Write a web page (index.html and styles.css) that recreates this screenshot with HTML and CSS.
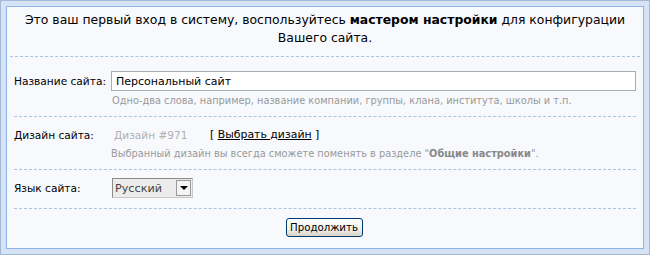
FILE: index.html
```html
<!DOCTYPE html>
<html lang="ru">
<head>
  <meta charset="UTF-8" />
  <title>Мастер настройки</title>
  <link rel="stylesheet" href="styles.css">
</head>
<body>

  <div class="frame">
    <div class="panel">
      <div class="intro">
        Это ваш первый вход в систему, воспользуйтесь <b>мастером настройки</b> для конфигурации<br>
        Вашего сайта.
      </div>

      <div class="row row-name">
        <div class="label">Название сайта:</div>
        <div class="field">
          <input type="text" class="text-input" value="Персональный сайт">
          <div class="hint">Одно-два слова, например, название компании, группы, клана, института, школы и т.п.</div>
        </div>
      </div>

      <div class="row row-design">
        <div class="label">Дизайн сайта:</div>
        <div class="field">
          <div class="design-line">
            <span class="design-name">Дизайн #971</span>
            <span class="design-pick">[ <a href="#">Выбрать дизайн</a> ]</span>
          </div>
          <div class="hint">Выбранный дизайн вы всегда сможете поменять в разделе "<b>Общие настройки</b>".</div>
        </div>
      </div>

      <div class="row row-lang">
        <div class="label">Язык сайта:</div>
        <div class="field">
          <div class="select">
            <span class="select-value">Русский</span>
            <span class="select-arrow"></span>
          </div>
        </div>
      </div>

      <div class="actions">
        <button class="btn">Продолжить</button>
      </div>
    </div>
  </div>

</body>
</html>
```

FILE: styles.css
```css
body {
  margin: 0;
  font-family: 'DejaVu Sans', Verdana, sans-serif;
  font-size: 12.4px;
  color: #000;
  background: #fff;
}

.frame {
  width: 638px;
  height: 243px;
  border: 1px solid #a3b9d6;
  padding: 5px;
  background: #d5e3f5;
}

.panel {
  height: 241px;
  border: 1px solid #8fb3e4;
  background: #f7f9fd;
}

.intro {
  margin: 0 3px;
  padding: 4px 0 9px;
  line-height: 18px;
  text-align: center;
  border-bottom: 1px dashed #a8c2ea;
}

.row {
  display: flex;
  margin: 0 7px;
  font-size: 10.6px;
  border-bottom: 1px dashed #a8c2ea;
}

.label {
  width: 97px;
  flex-shrink: 0;
  white-space: nowrap;
}

.field {
  flex: 1;
}

.hint {
  font-size: 9.8px;
  color: #999;
  line-height: 14px;
}

.hint b {
  color: #888;
}

.row-name {
  padding-top: 14px;
  padding-bottom: 8px;
}

.row-name .label {
  line-height: 20px;
}

.text-input {
  display: block;
  box-sizing: border-box;
  width: 525px;
  height: 20px;
  margin: 0;
  padding: 1px 4px 0;
  border: 1px solid #a5acb5;
  background: #fff;
  font-family: inherit;
  font-size: 11px;
  color: #000;
  outline: none;
}

.row-name .hint {
  padding: 3px 0 0 1px;
}

.row-design {
  padding-top: 9px;
  padding-bottom: 8px;
  line-height: 18px;
}

.design-line {
  display: flex;
  padding-left: 3px;
}

.design-name {
  width: 96px;
  color: #b0b0b0;
}

.design-pick {
  font-size: 10.9px;
}

.design-pick a {
  color: #000;
}

.row-design .hint {
  padding-top: 3px;
}

.row-lang {
  padding-top: 8px;
  padding-bottom: 10px;
}

.row-lang .label {
  line-height: 20px;
}

.select {
  display: flex;
  align-items: center;
  justify-content: space-between;
  box-sizing: border-box;
  width: 81px;
  height: 20px;
  margin-left: 1px;
  border: 1px solid #8a8a8a;
  border-right-color: #c8c8c8;
  border-bottom-color: #c8c8c8;
  background: #ececec;
  color: #444;
  font-size: 11.2px;
  padding-left: 2px;
}

.select-arrow {
  position: relative;
  width: 15px;
  height: 16px;
  margin-right: 1px;
  box-sizing: border-box;
  border: 1px solid #999;
  background: #f4f4f4;
}

.select-arrow::after {
  content: "";
  position: absolute;
  left: 3px;
  top: 5px;
  border-left: 4px solid transparent;
  border-right: 4px solid transparent;
  border-top: 4px solid #000;
}

.actions {
  display: flex;
  justify-content: center;
  padding-top: 9px;
}

.btn {
  box-sizing: border-box;
  width: 77px;
  height: 19px;
  padding: 0;
  margin-left: -2px;
  border: 1px solid #003c74;
  border-radius: 3px;
  background: linear-gradient(#ffffff, #f0f0ea 60%, #d8d5c8);
  font-family: inherit;
  font-size: 10.2px;
  color: #000;
  cursor: pointer;
}
```
